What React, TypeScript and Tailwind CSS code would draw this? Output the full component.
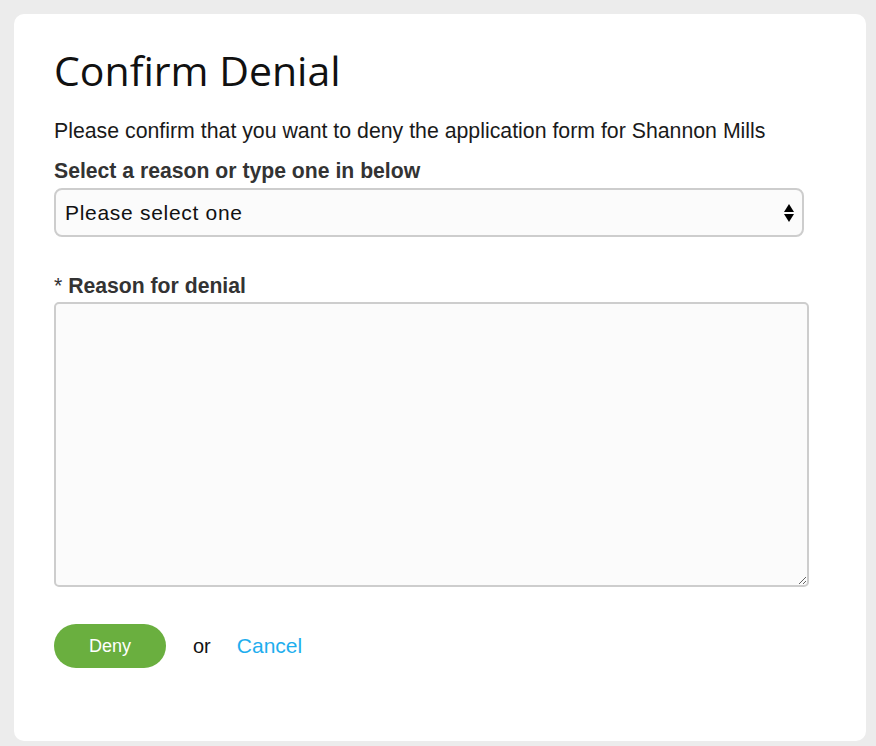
import React from "react"

export default function App() {
  return (
    <div className="min-h-screen bg-[#ececec] p-[14px] pr-[10px]" style={{ fontFamily: '"Liberation Sans", Arial, sans-serif' }}>
      <div className="h-[727px] w-[852px] rounded-[10px] bg-white pl-[40px] pt-[28px]">
        <h1 className="text-[41px] leading-[56px] text-[#111]" style={{ fontFamily: '"Open Sans", "Noto Sans", sans-serif' }}>
          Confirm Denial
        </h1>
        <p className="mt-[21px] text-[21.3px] leading-[24px] text-[#1a1a1a]">
          Please confirm that you want to deny the application form for Shannon Mills
        </p>
        <label className="mt-[16px] block text-[21.2px] font-bold leading-[24px] text-[#333]">
          Select a reason or type one in below
        </label>
        <div className="mt-[5px] flex h-[49px] w-[750px] items-center justify-between rounded-[8px] border-2 border-[#cdcdcd] bg-[#fbfbfb] pl-[9px] pr-[8px]">
          <span className="text-[21px] tracking-[0.7px] text-[#111]">Please select one</span>
          <svg width="10" height="20" viewBox="0 0 10 20" className="text-black">
            <path d="M5 1 L10 9 L0 9 Z" fill="currentColor" />
            <path d="M0 11 L10 11 L5 19 Z" fill="currentColor" />
          </svg>
        </div>
        <label className="mt-[37px] block text-[21.2px] font-bold leading-[24px] text-[#333]">
          <span className="font-normal">*</span> Reason for denial
        </label>
        <textarea className="mt-[4px] block h-[285px] w-[755px] resize rounded-[5px] border-2 border-[#cdcdcd] bg-[#fbfbfb] outline-none" />
        <div className="mt-[37px] flex items-center">
          <button className="h-[44px] w-[112px] rounded-[22px] bg-[#6aaf3f] text-[18px] text-white">Deny</button>
          <span className="ml-[27px] text-[20px] text-[#111]">or</span>
          <a href="#" className="ml-[26px] text-[21px] text-[#1eaeee]">Cancel</a>
        </div>
      </div>
    </div>
  )
}
